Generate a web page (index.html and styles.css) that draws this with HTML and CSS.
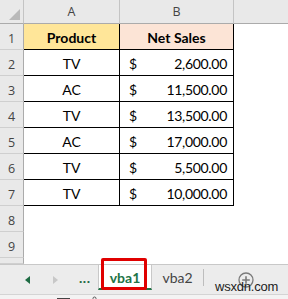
FILE: index.html
```html
<!DOCTYPE html>
<html>
<head>
<meta charset="utf-8">
<link rel="stylesheet" href="styles.css">
</head>
<body>
<div class="app">
  <div class="sheet">
    <div class="corner"><svg width="23" height="23" viewBox="0 0 23 23"><polygon points="9,20 20,20 20,9" fill="#b9b9b9"/></svg></div>
    <div class="ch">A</div>
    <div class="ch">B</div>
    <div class="ch last"></div>

    <div class="rh">1</div>
    <div class="c t hdr-a">Product</div>
    <div class="c t hdr-b">Net Sales</div>
    <div class="c"></div>

    <div class="rh">2</div>
    <div class="c t ctr">TV</div>
    <div class="c t acc"><span>$</span><span>2,600.00</span></div>
    <div class="c"></div>

    <div class="rh">3</div>
    <div class="c t ctr">AC</div>
    <div class="c t acc"><span>$</span><span>11,500.00</span></div>
    <div class="c"></div>

    <div class="rh">4</div>
    <div class="c t ctr">TV</div>
    <div class="c t acc"><span>$</span><span>13,500.00</span></div>
    <div class="c"></div>

    <div class="rh">5</div>
    <div class="c t ctr">AC</div>
    <div class="c t acc"><span>$</span><span>17,000.00</span></div>
    <div class="c"></div>

    <div class="rh">6</div>
    <div class="c t ctr">TV</div>
    <div class="c t acc"><span>$</span><span>5,500.00</span></div>
    <div class="c"></div>

    <div class="rh">7</div>
    <div class="c t ctr">TV</div>
    <div class="c t acc"><span>$</span><span>10,000.00</span></div>
    <div class="c"></div>

    <div class="rh">8</div>
    <div class="c"></div><div class="c"></div><div class="c"></div>

    <div class="rh">9</div>
    <div class="c"></div><div class="c"></div><div class="c"></div>

    <div class="rh"></div>
    <div class="c"></div><div class="c"></div><div class="c"></div>
  </div>

  <div class="tabbar">
    <div class="nav">
      <span class="arrow-l"></span>
      <span class="arrow-r"></span>
      <span class="dots">...</span>
    </div>
    <div class="tab active">vba1<span class="mark"></span></div>
    <div class="tab">vba2</div>
    <div class="sep"></div>
    <div class="add">
      <svg width="16" height="16" viewBox="0 0 16 16"><circle cx="8" cy="8" r="7" fill="none" stroke="#7a7a7a" stroke-width="1.3"/><path d="M8 4.2V11.8M4.2 8H11.8" stroke="#7a7a7a" stroke-width="1.6"/></svg>
    </div>
    <span class="watermark">wsxdn.com</span>
  </div>

  <div class="status">
    <svg width="288" height="5" viewBox="0 0 288 5"><rect x="57" y="3" width="13" height="2" fill="#444"/><path d="M93 5V3.5a1.5 1.5 0 0 1 3 0V5" fill="none" stroke="#555" stroke-width="1"/></svg>
  </div>
</div>
</body>
</html>
```

FILE: styles.css
```css
* { box-sizing: border-box; }
html, body { margin: 0; padding: 0; }
body { width: 288px; height: 299px; overflow: hidden; background: #fff; }

.app { width: 288px; height: 299px; display: flex; flex-direction: column; }

.sheet {
  height: 264px;
  flex: none;
  display: grid;
  grid-template-columns: 24px 96px 114px 1fr;
  grid-template-rows: 24px repeat(9, 26px) 6px;
  overflow: hidden;
  font-family: "Lato", "Liberation Sans", sans-serif;
  color: #000;
}

.corner {
  background: #e9e9e9;
  border-right: 1px solid #c4c4c4;
  border-bottom: 1px solid #ababab;
}
.corner svg { display: block; }

.ch {
  background: #e9e9e9;
  border-right: 1px solid #c4c4c4;
  border-bottom: 1px solid #ababab;
  display: flex; align-items: center; justify-content: center;
  font-family: "Open Sans", "Liberation Sans", sans-serif;
  font-size: 12.5px;
  color: #444;
}
.ch.last { border-right: none; }

.rh {
  background: #e9e9e9;
  border-right: 1px solid #ababab;
  border-bottom: 1px solid #cfcfcf;
  display: flex; align-items: center; justify-content: center;
  padding-top: 3px;
  font-family: "Open Sans", "Liberation Sans", sans-serif;
  font-size: 12.5px;
  color: #444;
}

.c { background: #fff; }
.c.t {
  border-right: 1px solid #000;
  border-bottom: 1px solid #000;
  font-size: 14px;
  display: flex; align-items: center;
  padding-top: 2px;
}
.ctr { justify-content: center; }
.hdr-a {
  background: #ffe699;
  justify-content: center;
  font-weight: 700;
  font-size: 15px;
}
.hdr-b {
  background: #fce4d6;
  justify-content: center;
  font-weight: 700;
  font-size: 15px;
}
.acc {
  justify-content: space-between;
  padding-left: 9px;
  padding-right: 6px;
  letter-spacing: -0.3px;
}

.tabbar {
  height: 30px;
  flex: none;
  position: relative;
  background: #ececec;
  border-top: 1px solid #c8c8c8;
  display: flex;
  align-items: stretch;
  font-family: "Lato", "Liberation Sans", sans-serif;
}

.nav {
  width: 98px;
  flex: none;
  display: flex;
  align-items: center;
  padding-left: 25px;
}
.arrow-l {
  width: 0; height: 0;
  border-top: 4px solid transparent;
  border-bottom: 4px solid transparent;
  border-right: 5px solid #1e6b43;
}
.arrow-r {
  width: 0; height: 0;
  margin-left: 23px;
  border-top: 4px solid transparent;
  border-bottom: 4px solid transparent;
  border-left: 5px solid #c8c8c8;
}
.dots {
  margin-left: 21px;
  font-weight: 700;
  font-size: 14px;
  color: #1e6b43;
  letter-spacing: 0.5px;
  padding-bottom: 5px;
}

.tab {
  width: 51px;
  flex: none;
  display: flex; align-items: center; justify-content: center;
  font-size: 14px;
  color: #444;
  padding-bottom: 4px;
}
.tab.active {
  width: 54px;
  position: relative;
  height: 25px;
  background: #fff;
  border-bottom: 2px solid #217346;
  border-left: 1px solid #c8c8c8;
  border-right: 1px solid #c8c8c8;
  color: #217346;
  font-weight: 700;
  padding-bottom: 0;
  padding-top: 2px;
}
.mark {
  position: absolute;
  left: 2px; top: -7px;
  width: 46px; height: 32px;
  border: 3px solid #e00000;
  border-radius: 2px;
}

.sep {
  width: 1px;
  flex: none;
  background: #bdbdbd;
  margin: 4px 0 8px;
}

.add {
  flex: none;
  margin-left: 34px;
  display: flex; align-items: center;
  padding-bottom: 1px;
  padding-top: 1px;
}
.add svg { display: block; }

.watermark {
  position: absolute;
  left: 215px;
  top: 15px;
  font-family: "Liberation Sans", sans-serif;
  font-size: 13px;
  line-height: 14px;
  color: #222;
  letter-spacing: -0.2px;
}

.status {
  flex: 1;
  background: #f3f3f3;
  border-top: 1px solid #d4d4d4;
  overflow: hidden;
}
.status svg { display: block; }
```
